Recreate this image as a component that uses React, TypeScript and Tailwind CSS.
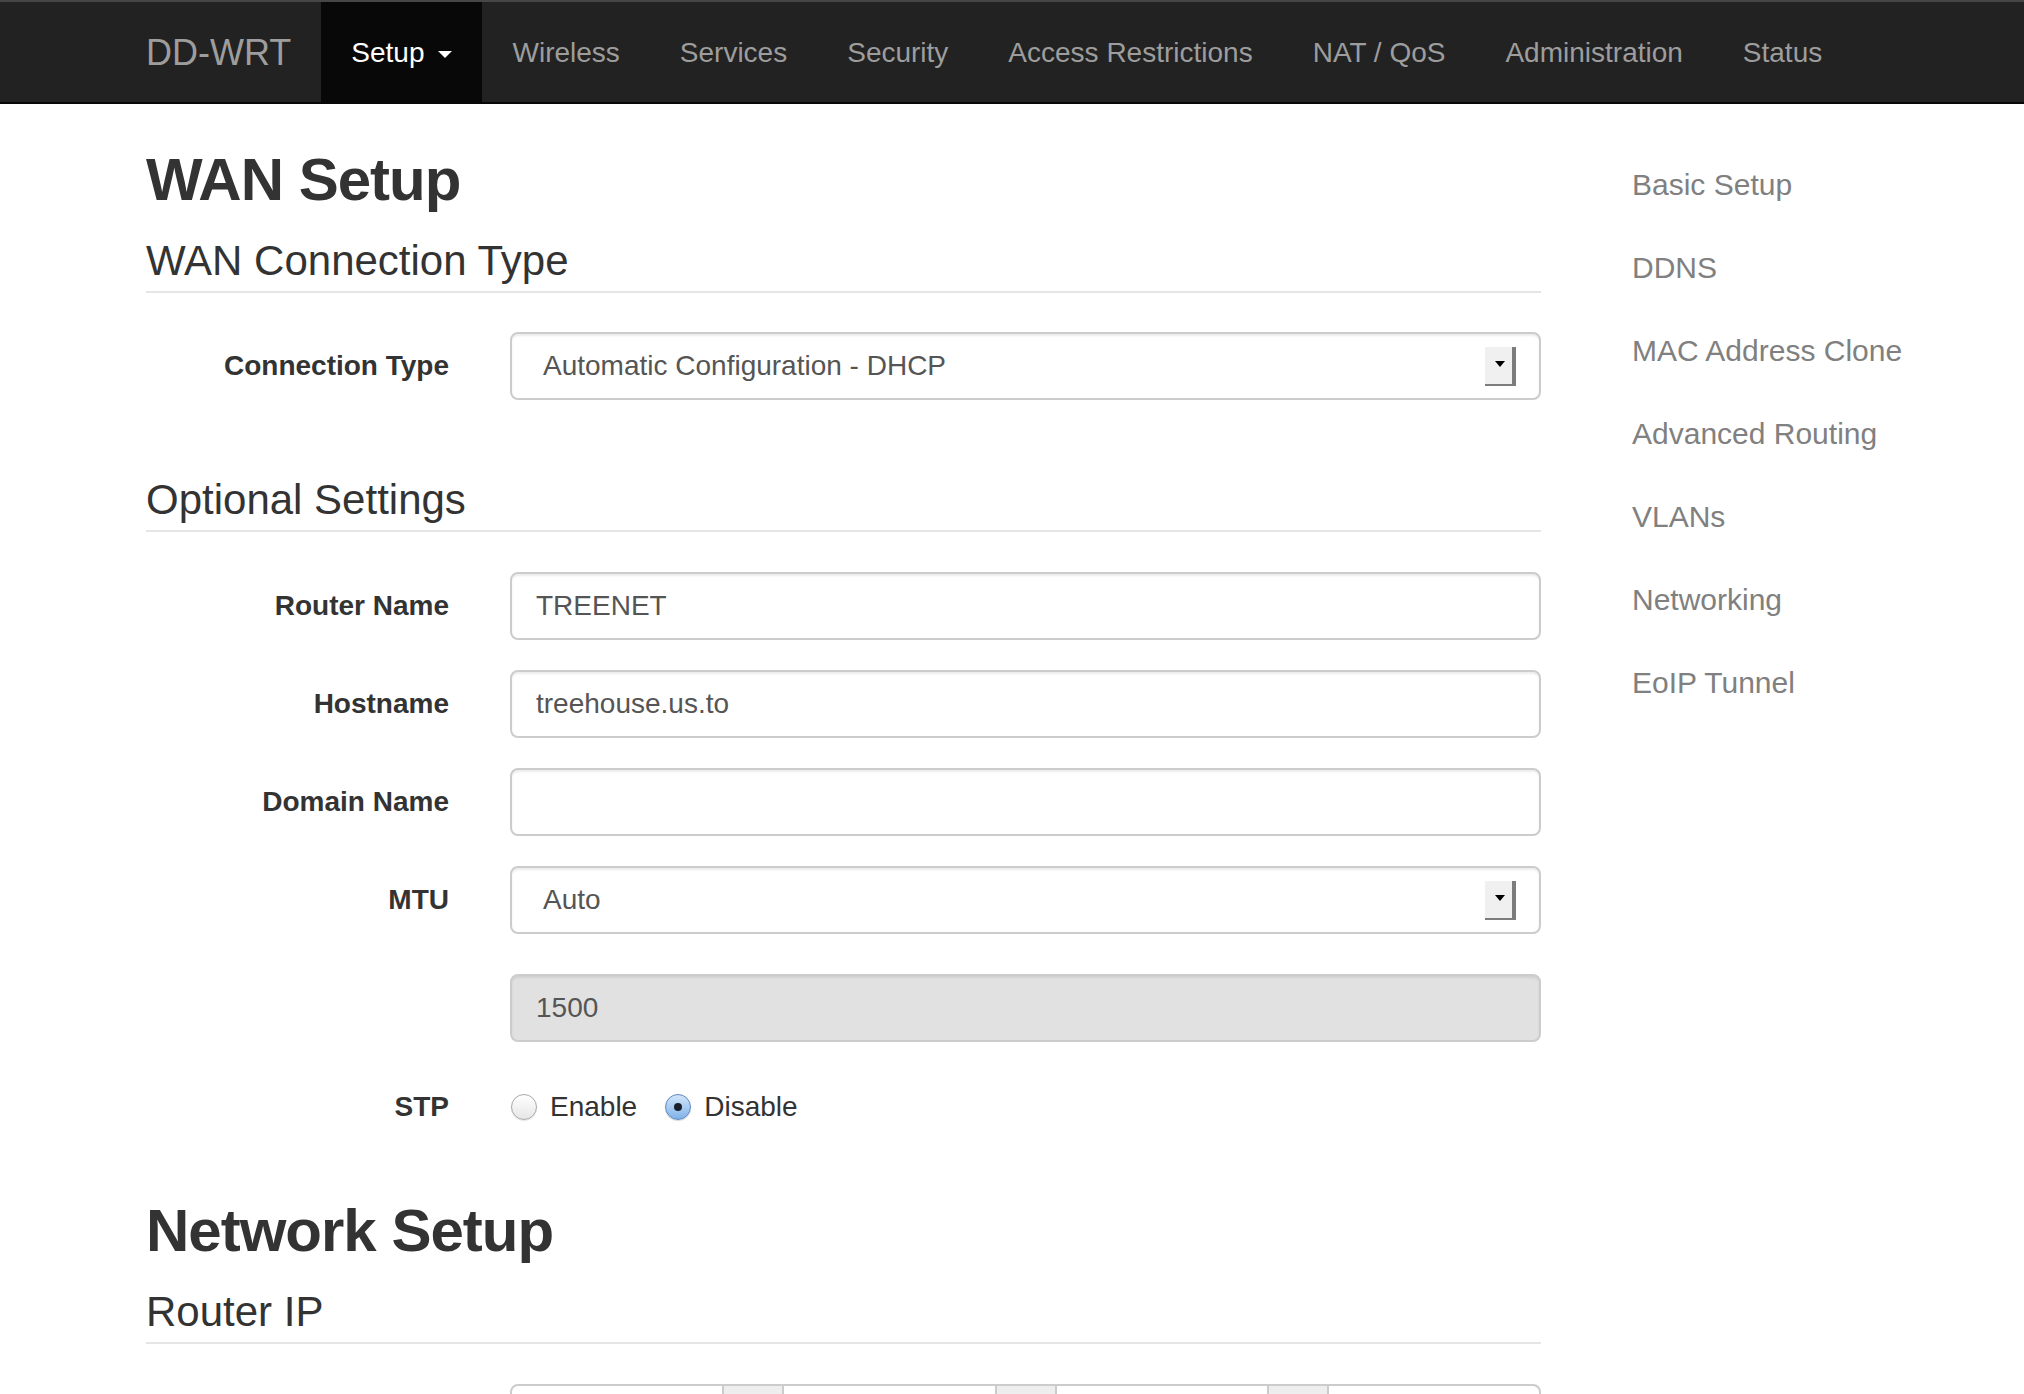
import React from 'react';

const navItems = ['Wireless', 'Services', 'Security', 'Access Restrictions', 'NAT / QoS', 'Administration', 'Status'];
const sideItems = ['Basic Setup', 'DDNS', 'MAC Address Clone', 'Advanced Routing', 'VLANs', 'Networking', 'EoIP Tunnel'];

function Legend({ children, className = '' }: { children: React.ReactNode; className?: string }) {
  return (
    <div className={`text-[42px] leading-[48px] text-[#333] pb-[6px] border-b-2 border-[#e5e5e5] ${className}`}>
      {children}
    </div>
  );
}

function Row({ label, children, className = '' }: { label?: string; children: React.ReactNode; className?: string }) {
  return (
    <div className={`flex items-center ${className}`}>
      <div className="w-[303px] shrink-0 text-right text-[28px] font-bold text-[#333]">{label}</div>
      <div className="ml-[61px] flex-1">{children}</div>
    </div>
  );
}

function TextInput({ value, gray }: { value: string; gray?: boolean }) {
  return (
    <input
      readOnly
      value={value}
      className={`block w-full h-[68px] rounded-[8px] border-2 border-[#ccc] px-[24px] text-[28px] text-[#555] outline-none shadow-[inset_0_2px_2px_rgba(0,0,0,0.075)] ${gray ? 'bg-[#e1e1e1]' : 'bg-white'}`}
    />
  );
}

function SelectBox({ value }: { value: string }) {
  return (
    <div className="h-[68px] rounded-[8px] border-2 border-[#ccc] bg-white pl-[31px] pr-[23px] flex items-center justify-between text-[28px] text-[#555] shadow-[inset_0_2px_2px_rgba(0,0,0,0.075)]">
      <span>{value}</span>
      <div className="w-[31px] h-[39px] bg-[#f0f0f0] border-r-4 border-b-2 border-[#7c7c7c] flex items-center justify-center">
        <div className="mb-[3px] ml-[2px] w-0 h-0 border-l-[5px] border-r-[5px] border-t-[6px] border-l-transparent border-r-transparent border-t-black" />
      </div>
    </div>
  );
}

function Radio({ checked, label }: { checked?: boolean; label: string }) {
  return (
    <div className="flex items-center">
      {checked ? (
        <div className="w-[26px] h-[26px] rounded-full border border-[#5b88bf] bg-gradient-to-b from-[#d3e6fa] to-[#7fb2e8] flex items-center justify-center shadow-[0_1px_1px_rgba(0,0,0,0.15)]">
          <div className="w-[8px] h-[8px] rounded-full bg-[#1b1f2b]" />
        </div>
      ) : (
        <div className="w-[26px] h-[26px] rounded-full border border-[#a8a8a8] bg-gradient-to-b from-white to-[#e6e6e6] shadow-[0_1px_1px_rgba(0,0,0,0.1)]" />
      )}
      <span className="ml-[13px] text-[28px] text-[#333]">{label}</span>
    </div>
  );
}

export default function App() {
  return (
    <div className="w-[2024px] min-h-screen bg-white font-['Liberation_Sans',Arial,sans-serif]">
      {/* navbar */}
      <header className="h-[104px] bg-[#222] border-t-2 border-t-[#464646] border-b-2 border-b-[#080808] flex">
        <div className="ml-[146px] pt-[2px] flex items-center text-[36px] text-[#9d9d9d] pr-[30px]">DD-WRT</div>
        <nav className="flex text-[28px]">
          <div className="bg-[#080808] text-white px-[30px] pt-[2px] flex items-center">
            Setup
            <span className="ml-[14px] mt-[3px] w-0 h-0 border-l-[7px] border-r-[7px] border-t-[7px] border-l-transparent border-r-transparent border-t-white" />
          </div>
          {navItems.map(n => (
            <div key={n} className="px-[30px] pt-[2px] flex items-center text-[#9d9d9d]">{n}</div>
          ))}
        </nav>
      </header>

      <div className="flex">
        <main className="ml-[146px] w-[1395px] shrink-0">
          <h1 className="mt-[43px] text-[60px] leading-[66px] font-bold tracking-[-1px] text-[#333]">WAN Setup</h1>
          <Legend className="mt-[24px]">WAN Connection Type</Legend>
          <Row label="Connection Type" className="mt-[39px]">
            <SelectBox value="Automatic Configuration - DHCP" />
          </Row>

          <Legend className="mt-[76px]">Optional Settings</Legend>
          <Row label="Router Name" className="mt-[40px]">
            <TextInput value="TREENET" />
          </Row>
          <Row label="Hostname" className="mt-[30px]">
            <TextInput value="treehouse.us.to" />
          </Row>
          <Row label="Domain Name" className="mt-[30px]">
            <TextInput value="" />
          </Row>
          <Row label="MTU" className="mt-[30px]">
            <SelectBox value="Auto" />
          </Row>
          <Row className="mt-[40px]">
            <TextInput value="1500" gray />
          </Row>
          <Row label="STP" className="mt-[45px] h-[40px]">
            <div className="flex items-center gap-[28px] pl-[1px]">
              <Radio label="Enable" />
              <Radio label="Disable" checked />
            </div>
          </Row>

          <h1 className="mt-[71px] text-[60px] leading-[66px] font-bold tracking-[-1px] text-[#333]">Network Setup</h1>
          <Legend className="mt-[24px]">Router IP</Legend>
          {/* IP address row, only its top edge is in view */}
          <Row className="mt-[40px]">
            <div className="flex h-[68px]">
              <div className="flex-1 h-full rounded-l-[8px] border-2 border-[#ccc] bg-white" />
              <div className="w-[58px] h-full border-y-2 border-[#ccc] bg-[#eee]" />
              <div className="flex-1 h-full border-2 border-[#ccc] bg-white" />
              <div className="w-[58px] h-full border-y-2 border-[#ccc] bg-[#eee]" />
              <div className="flex-1 h-full border-2 border-[#ccc] bg-white" />
              <div className="w-[58px] h-full border-y-2 border-[#ccc] bg-[#eee]" />
              <div className="flex-1 h-full rounded-r-[8px] border-2 border-[#ccc] bg-white" />
            </div>
          </Row>
          <div className="h-[60px]" />
        </main>

        <aside className="ml-[91px] pt-[39px]">
          <ul>
            {sideItems.map(s => (
              <li key={s} className="text-[30px] leading-[83px] text-[#808080]">{s}</li>
            ))}
          </ul>
        </aside>
      </div>
    </div>
  );
}
